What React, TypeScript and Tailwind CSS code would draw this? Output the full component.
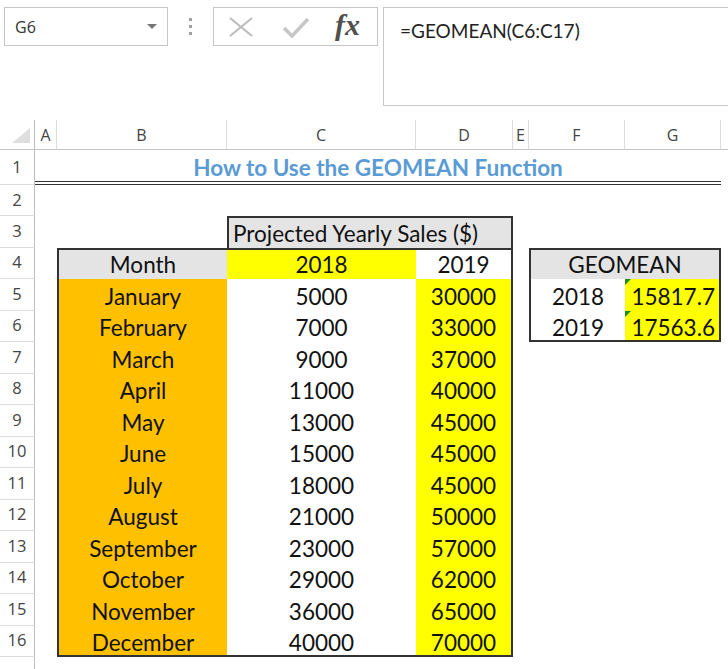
import React from "react";

const months = ["January","February","March","April","May","June","July","August","September","October","November","December"];
const y2018 = [5000,7000,9000,11000,13000,15000,18000,21000,23000,29000,36000,40000];
const y2019 = [30000,33000,37000,40000,45000,45000,45000,50000,57000,62000,65000,70000];

function RowHead({ n }: { n?: number }) {
  return (
    <div className="flex items-center justify-center border-r border-b border-r-[#bdbdbd] border-b-[#dcdcdc] text-[16.5px] text-[#444] font-['Open_Sans',sans-serif]">
      {n}
    </div>
  );
}

function ColHead({ l }: { l: string }) {
  return (
    <div className="flex items-center justify-center border-r border-b border-r-[#dcdcdc] border-b-[#c4c4c4] text-[16px] text-[#444] font-['Open_Sans',sans-serif]">
      {l}
    </div>
  );
}

function Tri() {
  return <div className="absolute top-0 left-0 w-0 h-0 border-t-[6px] border-r-[6px] border-t-[#1f8a1f] border-r-transparent" />;
}

export default function App() {
  return (
    <div className="w-[728px] h-[669px] bg-white overflow-hidden font-['Lato',sans-serif] text-[#111]">
      {/* Formula bar */}
      <div className="flex items-start pt-[7px] h-[120px]">
        <div className="ml-[4px] w-[164px] h-[39px] border border-[#c6c6c6] flex items-center justify-between pl-[10px] pr-[10px]">
          <span className="text-[16px] text-[#333] font-['Open_Sans',sans-serif]">G6</span>
          <span className="w-0 h-0 border-l-[5px] border-r-[5px] border-t-[5px] border-l-transparent border-r-transparent border-t-[#777]" />
        </div>
        <div className="w-[45px] h-[39px] flex flex-col items-center justify-center gap-[4px]">
          <span className="w-[3px] h-[3px] bg-[#a0a0a0]" />
          <span className="w-[3px] h-[3px] bg-[#a0a0a0]" />
          <span className="w-[3px] h-[3px] bg-[#a0a0a0]" />
        </div>
        <div className="w-[165px] h-[39px] border border-[#c6c6c6] flex items-center">
          <svg className="ml-[14px]" width="26" height="22" viewBox="0 0 26 22">
            <path d="M2 2 L24 20 M24 2 L2 20" stroke="#bdbdbd" strokeWidth="2.2" fill="none" />
          </svg>
          <svg className="ml-[28px]" width="28" height="22" viewBox="0 0 28 22">
            <path d="M2 12 L10 20 L26 3" stroke="#c6c6c6" strokeWidth="3.5" fill="none" />
          </svg>
          <span className="ml-[25px] text-[30px] leading-none italic font-bold text-[#505050] font-['Liberation_Serif',serif] -mt-[4px]">fx</span>
        </div>
        <div className="ml-[5px] flex-1 h-[99px] border border-r-0 border-[#c6c6c6] pl-[16px] pt-[9px] text-[19px] text-[#222]">
          =GEOMEAN(C6:C17)
        </div>
      </div>

      {/* Sheet */}
      <div className="grid grid-cols-[35px_22px_170px_189px_97px_16px_96px_96px_1fr] grid-rows-[30px_35px_31px_repeat(15,31.5px)] text-[22.5px]">
        {/* column headers */}
        <div className="relative border-r border-b border-r-[#bdbdbd] border-b-[#c4c4c4]">
          <svg className="absolute left-[12px] top-[8px]" width="18" height="15" viewBox="0 0 18 15">
            <polygon points="18,0 18,15 0,15" fill="#dedede" />
          </svg>
        </div>
        <ColHead l="A" />
        <ColHead l="B" />
        <ColHead l="C" />
        <ColHead l="D" />
        <ColHead l="E" />
        <ColHead l="F" />
        <ColHead l="G" />
        <div className="border-b border-b-[#c4c4c4]" />

        {/* row 1 */}
        <RowHead n={1} />
        <div className="col-span-7 flex items-end justify-center leading-[26px] font-bold text-[#5b9bd5] border-b-4 border-double border-[#333]">
          How to Use the GEOMEAN Function
        </div>
        <div />

        {/* row 2 */}
        <RowHead n={2} />
        <div className="col-span-8" />

        {/* row 3 */}
        <RowHead n={3} />
        <div />
        <div />
        <div className="col-span-2 flex items-end pl-[4px] pb-[1px] leading-[26px] bg-[#e4e4e4] border-t-2 border-l-2 border-r-2 border-[#333]">
          Projected Yearly Sales ($)
        </div>
        <div className="col-span-4" />

        {/* row 4 */}
        <RowHead n={4} />
        <div />
        <div className="flex items-end justify-center pb-[1px] leading-[26px] bg-[#e4e4e4] border-t-2 border-l-2 border-[#333]">Month</div>
        <div className="flex items-end justify-center pb-[1px] leading-[26px] bg-[#ffff00] border-t-2 border-[#333]">2018</div>
        <div className="flex items-end justify-center pb-[1px] leading-[26px] bg-white border-t-2 border-r-2 border-[#333]">2019</div>
        <div />
        <div className="col-span-2 flex items-end justify-center pb-[1px] leading-[26px] bg-[#e4e4e4] border-t-2 border-l-2 border-r-2 border-[#333]">GEOMEAN</div>
        <div />

        {/* rows 5-16 */}
        {months.map((m, i) => (
          <React.Fragment key={m}>
            <RowHead n={i + 5} />
            <div />
            <div className={i === 11 ? "flex items-end justify-center leading-[24px] bg-[#ffc000] border-l-2 border-b-2 border-[#333]" : "flex items-end justify-center pb-[1px] leading-[26px] bg-[#ffc000] border-l-2 border-[#333]"}>
              {m}
            </div>
            <div className={i === 11 ? "flex items-end justify-center leading-[24px] bg-white border-b-2 border-[#333]" : "flex items-end justify-center pb-[1px] leading-[26px] bg-white"}>
              {y2018[i]}
            </div>
            <div className={i === 11 ? "flex items-end justify-center leading-[24px] bg-[#ffff00] border-r-2 border-b-2 border-[#333]" : "flex items-end justify-center pb-[1px] leading-[26px] bg-[#ffff00] border-r-2 border-[#333]"}>
              {y2019[i]}
            </div>
            <div />
            {i === 0 ? (
              <>
                <div className="flex items-end justify-center pb-[1px] leading-[26px] border-l-2 border-[#333]">2018</div>
                <div className="relative flex items-end justify-end pr-[4px] pb-[1px] leading-[26px] bg-[#ffff00] border-r-2 border-[#333]">
                  <Tri />
                  15817.7
                </div>
              </>
            ) : i === 1 ? (
              <>
                <div className="flex items-end justify-center leading-[24px] border-l-2 border-b-2 border-[#333]">2019</div>
                <div className="relative flex items-end justify-end pr-[4px] leading-[24px] bg-[#ffff00] border-r-2 border-b-2 border-[#333]">
                  <Tri />
                  17563.6
                </div>
              </>
            ) : (
              <>
                <div />
                <div />
              </>
            )}
            <div />
          </React.Fragment>
        ))}

        {/* row 17 */}
        <RowHead />
        <div className="col-span-8" />
      </div>
    </div>
  );
}
